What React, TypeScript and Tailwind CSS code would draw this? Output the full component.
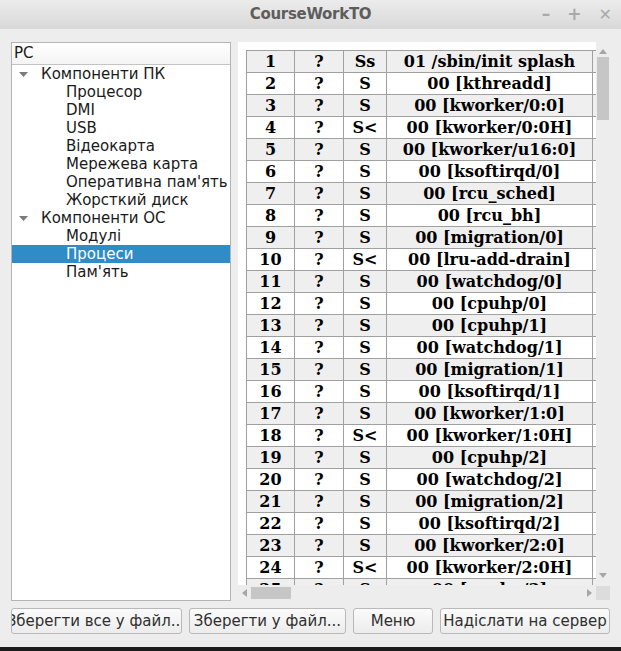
import React from "react";

const rows: [string, string, string, string][] = [
  ["1", "?", "Ss", "01 /sbin/init splash"],
  ["2", "?", "S", "00 [kthreadd]"],
  ["3", "?", "S", "00 [kworker/0:0]"],
  ["4", "?", "S<", "00 [kworker/0:0H]"],
  ["5", "?", "S", "00 [kworker/u16:0]"],
  ["6", "?", "S", "00 [ksoftirqd/0]"],
  ["7", "?", "S", "00 [rcu_sched]"],
  ["8", "?", "S", "00 [rcu_bh]"],
  ["9", "?", "S", "00 [migration/0]"],
  ["10", "?", "S<", "00 [lru-add-drain]"],
  ["11", "?", "S", "00 [watchdog/0]"],
  ["12", "?", "S", "00 [cpuhp/0]"],
  ["13", "?", "S", "00 [cpuhp/1]"],
  ["14", "?", "S", "00 [watchdog/1]"],
  ["15", "?", "S", "00 [migration/1]"],
  ["16", "?", "S", "00 [ksoftirqd/1]"],
  ["17", "?", "S", "00 [kworker/1:0]"],
  ["18", "?", "S<", "00 [kworker/1:0H]"],
  ["19", "?", "S", "00 [cpuhp/2]"],
  ["20", "?", "S", "00 [watchdog/2]"],
  ["21", "?", "S", "00 [migration/2]"],
  ["22", "?", "S", "00 [ksoftirqd/2]"],
  ["23", "?", "S", "00 [kworker/2:0]"],
  ["24", "?", "S<", "00 [kworker/2:0H]"],
  ["25", "?", "S", "00 [cpuhp/3]"],
];

type TreeItem = { label: string; level: 0 | 1; selected?: boolean };

const tree: TreeItem[] = [
  { label: "Компоненти ПК", level: 0 },
  { label: "Процесор", level: 1 },
  { label: "DMI", level: 1 },
  { label: "USB", level: 1 },
  { label: "Відеокарта", level: 1 },
  { label: "Мережева карта", level: 1 },
  { label: "Оперативна пам'ять", level: 1 },
  { label: "Жорсткий диск", level: 1 },
  { label: "Компоненти ОС", level: 0 },
  { label: "Модулі", level: 1 },
  { label: "Процеси", level: 1, selected: true },
  { label: "Пам'ять", level: 1 },
];

function Arrow({ dir }: { dir: "up" | "down" | "left" | "right" }) {
  const pts = {
    up: "0,5 4,0 8,5",
    down: "0,0 8,0 4,5",
    left: "5,0 5,8 0,4",
    right: "0,0 0,8 5,4",
  }[dir];
  const vertical = dir === "up" || dir === "down";
  return (
    <svg width={vertical ? 8 : 5} height={vertical ? 5 : 8} viewBox={vertical ? "0 0 8 5" : "0 0 5 8"}>
      <polygon points={pts} fill="#a6a6a6" />
    </svg>
  );
}

function Button({ children, className }: { children: React.ReactNode; className: string }) {
  return (
    <button
      className={`h-[26px] flex items-center justify-center overflow-hidden whitespace-nowrap rounded-[3px] border border-[#b9b9b9] bg-gradient-to-b from-[#fbfbfb] to-[#ececec] text-[15px] text-[#2f2f2f] ${className}`}
    >
      {children}
    </button>
  );
}

export default function App() {
  return (
    <div className="w-[621px] h-[651px] flex flex-col bg-[#ededed] font-['DejaVu_Sans',sans-serif] overflow-hidden">
      {/* Title bar */}
      <div className="h-[29px] shrink-0 relative flex items-center justify-center bg-gradient-to-b from-[#ececec] to-[#d8d8d8]">
        <span className="font-['DejaVu_Sans',sans-serif] font-bold text-[15px] tracking-[-0.3px] text-[#5d5d5d]">CourseWorkTO</span>
        <div className="absolute right-[9px] top-0 h-full flex items-center gap-[17px] text-[#a9a9a9] font-bold text-[17px]">
          <span>–</span>
          <span>+</span>
          <span className="text-[16px]">✕</span>
        </div>
      </div>

      {/* Main */}
      <div className="flex gap-[7px] px-[11px] pt-[13px] h-[572px] shrink-0">
        {/* Tree */}
        <div className="w-[220px] h-[559px] border border-[#b4b4b4] bg-white flex flex-col">
          <div className="h-[22px] border-b border-[#c4c4c4] bg-gradient-to-b from-white to-[#f4f4f4] flex items-center pl-[2px] text-[15px] text-[#1a1a1a]">
            PC
          </div>
          <div className="flex flex-col">
            {tree.map((t) => (
              <div
                key={t.label}
                className={`h-[18px] flex items-center text-[15px] leading-none whitespace-nowrap ${
                  t.selected ? "bg-[#308cc6] text-white" : "text-[#1a1a1a]"
                } ${t.level === 0 ? "pl-[7px]" : "pl-[54px]"}`}
              >
                {t.level === 0 && (
                  <span className="w-[22px] flex items-center">
                    <svg width="9" height="5" viewBox="0 0 9 5">
                      <polygon points="0,0 9,0 4.5,5" fill="#7a7a7a" />
                    </svg>
                  </span>
                )}
                {t.label}
              </div>
            ))}
          </div>
        </div>

        {/* Table area */}
        <div className="w-[372px] h-[559px] flex flex-col">
          <div className="flex h-[543px]">
            <div className="w-[358px] h-full bg-white overflow-hidden pl-[8px] pt-[8px]">
              <table className="table-fixed border-collapse w-[1400px] font-['DejaVu_Serif',serif] font-bold text-[16px] text-black">
                <colgroup>
                  <col className="w-[48px]" />
                  <col className="w-[49px]" />
                  <col className="w-[43px]" />
                  <col className="w-[206px]" />
                  <col />
                </colgroup>
                <tbody>
                  {rows.map((r, i) => (
                    <tr key={r[0]} className={`h-[22px] ${i % 2 === 0 ? "bg-[#efefef]" : "bg-white"}`}>
                      {r.map((c, j) => (
                        <td key={j} className="border border-[#a0a0a0] text-center p-0 leading-none whitespace-nowrap">
                          {c}
                        </td>
                      ))}
                      <td className="border border-[#a0a0a0] p-0"></td>
                    </tr>
                  ))}
                </tbody>
              </table>
            </div>
            {/* vertical scrollbar */}
            <div className="w-[14px] h-full flex flex-col items-center">
              <div className="h-[12px] flex items-end justify-center">
                <Arrow dir="up" />
              </div>
              <div className="mt-[3px] w-[12px] h-[63px] bg-[#c6c6c6]" />
              <div className="flex-1" />
              <div className="h-[14px] flex items-start justify-center pt-[2px]">
                <Arrow dir="down" />
              </div>
            </div>
          </div>
          {/* horizontal scrollbar */}
          <div className="flex h-[16px]">
            <div className="w-[358px] h-full flex items-center">
              <div className="w-[13px] flex justify-center">
                <Arrow dir="left" />
              </div>
              <div className="h-[12px] w-[40px] bg-[#c6c6c6]" />
              <div className="flex-1" />
              <div className="w-[13px] flex justify-center">
                <Arrow dir="right" />
              </div>
            </div>
            <div className="w-[14px] h-[14px] mt-[1px] bg-[#dcdcdc]" />
          </div>
        </div>
      </div>

      {/* Buttons */}
      <div className="flex pl-[11px] gap-[7px] pt-[7px] h-[46px] shrink-0">
        <Button className="w-[171px]">
          <span className="-ml-[6px]">Зберегти все у файл..</span>
        </Button>
        <Button className="w-[157px]">Зберегти у файл...</Button>
        <Button className="w-[80px]">Меню</Button>
        <Button className="w-[170px]">Надіслати на сервер</Button>
      </div>

      <div className="flex-1 bg-[#1c1c1c]" />
    </div>
  );
}
